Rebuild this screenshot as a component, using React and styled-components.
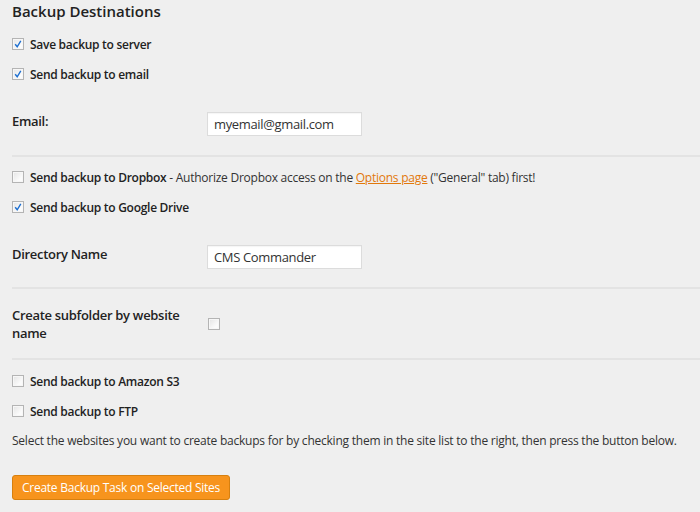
import React from "react"
import styled, { createGlobalStyle } from "styled-components"

const GlobalStyle = createGlobalStyle`
    html, body {
        margin: 0;
        padding: 0;
        background: #efefef;
    }
    body {
        font-family: "Open Sans", "Liberation Sans", sans-serif;
        color: #333;
    }
`

const Check = ({ checked }) => (
    <StyledBox>
        {checked && (
            <svg width="10" height="10" viewBox="0 0 10 10">
                <path d="M2.2 5.2 L4.2 7.8 L7.8 1.8" fill="none" stroke="#1e6fd0" strokeWidth="1.4" />
            </svg>
        )}
    </StyledBox>
)

const CheckRow = ({ checked, label, children }) => (
    <StyledCheckRow>
        <Check checked={checked} />
        <span>
            <strong>{label}</strong>
            {children}
        </span>
    </StyledCheckRow>
)

const App = () => {
    return (
        <StyledPage>
            <GlobalStyle />
            <StyledTitle>Backup Destinations</StyledTitle>

            <StyledGroup>
                <CheckRow checked label="Save backup to server" />
                <CheckRow checked label="Send backup to email" />
            </StyledGroup>

            <StyledField $top={23} $bottom={19}>
                <StyledLabel>Email:</StyledLabel>
                <StyledInput defaultValue="myemail@gmail.com" />
            </StyledField>

            <StyledDivider />

            <StyledGroup $top={5}>
                <CheckRow label="Send backup to Dropbox">
                    {" - Authorize Dropbox access on the "}
                    <StyledLink href="#">Options page</StyledLink>
                    {" (\"General\" tab) first!"}
                </CheckRow>
                <CheckRow checked label="Send backup to Google Drive" />
            </StyledGroup>

            <StyledField $top={23} $bottom={18}>
                <StyledLabel>Directory Name</StyledLabel>
                <StyledInput defaultValue="CMS Commander" />
            </StyledField>

            <StyledDivider />

            <StyledField $top={17} $bottom={16} $center>
                <StyledLabel>Create subfolder by website name</StyledLabel>
                <StyledCheckCell>
                    <Check />
                </StyledCheckCell>
            </StyledField>

            <StyledDivider />

            <StyledGroup $top={6}>
                <CheckRow label="Send backup to Amazon S3" />
                <CheckRow label="Send backup to FTP" />
            </StyledGroup>

            <StyledNote>
                Select the websites you want to create backups for by checking them in the site list to the right, then press the button below.
            </StyledNote>

            <StyledButton>Create Backup Task on Selected Sites</StyledButton>
        </StyledPage>
    )
}

const StyledPage = styled.div`
    padding: 0 0 10px 12px;
    min-height: 512px;
    box-sizing: border-box;
`

const StyledTitle = styled.h2`
    margin: 0 0 7px;
    font-size: 15px;
    line-height: 22px;
    font-weight: 600;
    color: #222;
`

const StyledGroup = styled.div`
    padding-top: ${(p) => p.$top || 0}px;
`

const StyledCheckRow = styled.div`
    display: flex;
    align-items: center;
    gap: 6px;
    height: 30px;
    font-size: 12px;
    letter-spacing: -0.25px;
    color: #333;

    strong {
        font-weight: 600;
        letter-spacing: -0.28px;
        color: #222;
    }
`

const StyledBox = styled.span`
    width: 10px;
    height: 10px;
    flex: none;
    display: inline-flex;
    align-items: center;
    justify-content: center;
    border: 1px solid #b4b4b4;
    background: linear-gradient(135deg, #e4e4e4, #fbfbfb 70%);
    box-shadow: inset 0 0 0 1px #f7f7f7;
`

const StyledField = styled.div`
    display: flex;
    align-items: ${(p) => (p.$center ? "center" : "flex-start")};
    padding: ${(p) => p.$top}px 0 ${(p) => p.$bottom}px;
`

const StyledLabel = styled.div`
    width: 180px;
    margin-right: 15px;
    font-size: 13px;
    line-height: 18px;
    font-weight: 600;
    letter-spacing: -0.3px;
    color: #222;
`

const StyledInput = styled.input`
    width: 155px;
    height: 24px;
    box-sizing: border-box;
    border: 1px solid #dcdcdc;
    background: #fff;
    padding: 0 6px;
    font-family: "Open Sans", "Liberation Sans", sans-serif;
    font-size: 13px;
    letter-spacing: -0.35px;
    color: #333;
    outline: none;
    box-shadow: inset 0 1px 1px rgba(0, 0, 0, 0.04);
`

const StyledCheckCell = styled.div`
    padding-left: 1px;
    display: flex;
`

const StyledDivider = styled.div`
    height: 2px;
    background: #e3e3e3;
`

const StyledLink = styled.a`
    color: #e2780b;
    text-decoration: underline;
`

const StyledNote = styled.p`
    margin: 6px 0 0;
    font-size: 12px;
    line-height: 18px;
    letter-spacing: -0.23px;
    white-space: nowrap;
    color: #333;
`

const StyledButton = styled.button`
    margin-top: 25px;
    width: 218px;
    height: 25px;
    border: 1px solid #d7800f;
    border-radius: 3px;
    background: #f7941d;
    color: #fff;
    font-family: "Open Sans", "Liberation Sans", sans-serif;
    font-size: 12px;
    letter-spacing: -0.25px;
    padding: 0;
    cursor: pointer;
`

export default App
